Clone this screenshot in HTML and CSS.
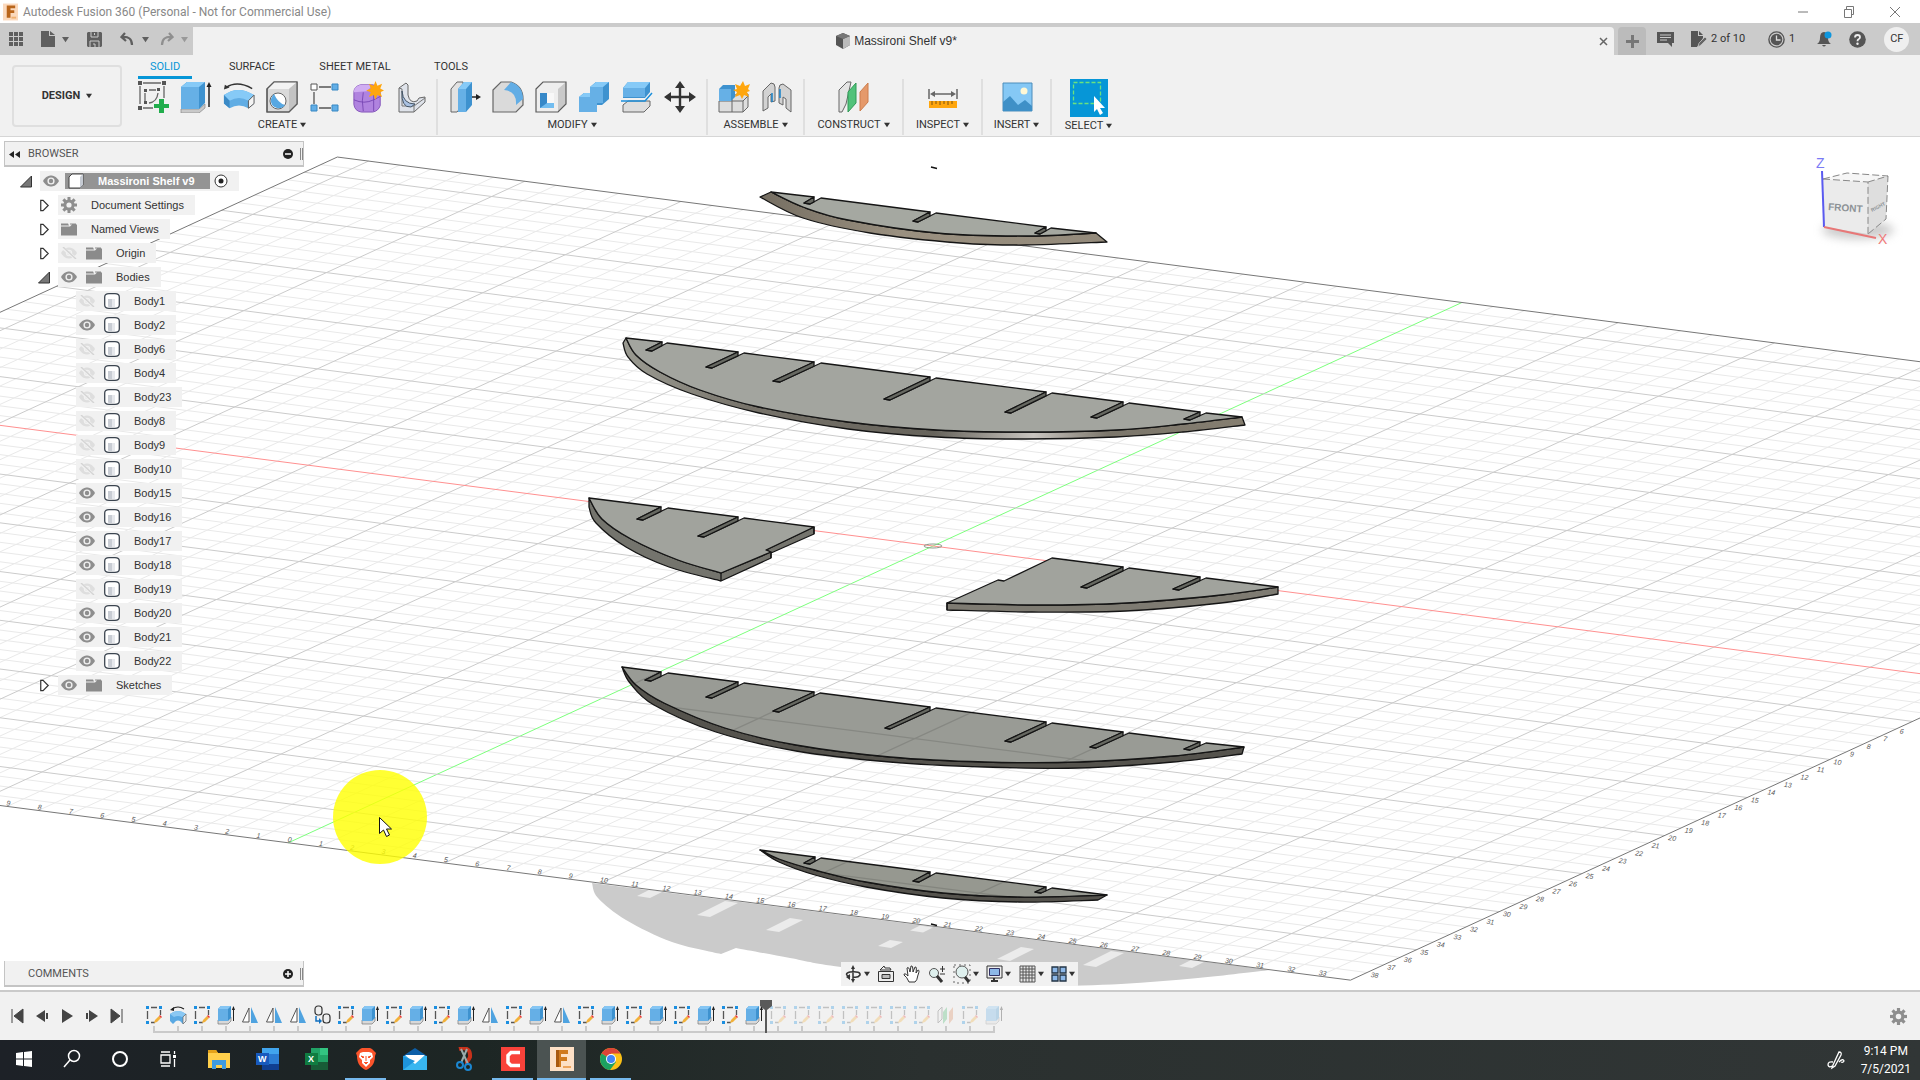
FILE: index.html
```html
<!DOCTYPE html>
<html lang="en">
<head>
<meta charset="utf-8">
<title>Autodesk Fusion 360</title>
<link rel="stylesheet" href="styles.css">
</head>
<body>
<svg class="defs" aria-hidden="true">
  <symbol id="caret" viewBox="0 0 8 8"><path d="M0 1h8L4 7z" fill="currentColor"/></symbol>
  <symbol id="eye" viewBox="0 0 16 12"><path d="M0 6C3 1 6 .5 8 .5S13 1 16 6c-3 5-6 5.500-8 5.500S3 11 0 6z" fill="#8e8e8e"/><circle cx="8" cy="6" r="3.600" fill="#f1f1f1"/><circle cx="8" cy="6" r="2.200" fill="#8e8e8e"/></symbol>
  <symbol id="eye-off" viewBox="0 0 16 12"><path d="M0 6C3 1 6 .5 8 .5S13 1 16 6c-3 5-6 5.500-8 5.500S3 11 0 6z" fill="#dedede"/><circle cx="8" cy="6" r="3.200" fill="#f1f1f1"/><circle cx="8" cy="6" r="2" fill="#dedede"/><path d="M1 0l14 12" stroke="#f1f1f1" stroke-width="3"/><path d="M2 0l13 12" stroke="#d4d4d4" stroke-width="1.400"/></symbol>
  <symbol id="folder" viewBox="0 0 16 13"><path d="M0 1h7l1 2H0zM9 1h6v1H9zM0 4h9l2-2h5v11H0z" fill="#8b8b8b"/></symbol>
  <symbol id="body" viewBox="0 0 16 16"><path d="M.7 4Q.7.7 5 .7h6q4.300 0 4.300 3.300v8q0 3.300-4.300 3.300H5Q.7 15.300.7 12z" fill="#fff" stroke="#3c4550" stroke-width="1.300"/><path d="M4 6h4v8H5q-1 0-1-1z" fill="#c9cdd4"/><path d="M8 6h3v8H8z" fill="#e6e8ec"/></symbol>
  <symbol id="gear" viewBox="0 0 16 16"><g fill="#8e8e8e"><rect x="6.500" width="3" height="16"/><rect x="6.500" width="3" height="16" transform="rotate(45 8 8)"/><rect x="6.500" width="3" height="16" transform="rotate(90 8 8)"/><rect x="6.500" width="3" height="16" transform="rotate(135 8 8)"/><circle cx="8" cy="8" r="5.600"/></g><circle cx="8" cy="8" r="2.600" fill="#f1f1f1"/></symbol>
  <symbol id="shut" viewBox="0 0 12 14"><path d="M2.500 1.500H5l5.500 5.500L5 12.500H2.500z" fill="#fff" stroke="#333" stroke-width="1.300"/></symbol>
  <symbol id="open" viewBox="0 0 12 12"><path d="M11.500.5v11H.5z" fill="#777" stroke="#333"/></symbol>
  <symbol id="f-sketch" viewBox="0 0 18 20"><path d="M2.500 6v8M6 2.500h6M15.500 5v5M6 17.500h4" stroke="#555" stroke-width="1.300" fill="none"/><g fill="#1c8fe0"><path d="M1 1h3v3H1zM14 1h3v3h-3zM1 16h3v3H1z"/></g><path d="M9 18l1-3 4-4 2 2-4 4z" fill="#f2b13a"/><path d="M14 11l1-1 2 2-1 1z" fill="#e33"/></symbol>
  <symbol id="f-extrude" viewBox="0 0 18 20"><path d="M1 15h10l3-3v4l-3 3H1z" fill="#d8d8d8" stroke="#777" stroke-width=".7"/><path d="M1 4l3-3h10v12l-3 3H1z" fill="#3e92cf"/><path d="M1 4h10v12H1z" fill="#65afe6"/><path d="M1 4l3-3h10l-3 3z" fill="#85c6f4"/><path d="M16.500 2v14" stroke="#222"/><path d="M14.800 5l1.700-4 1.500 4z" fill="#222"/></symbol>
  <symbol id="f-mirror" viewBox="0 0 18 20"><path d="M8 3v14H1.500z" fill="#fff" stroke="#555"/><path d="M10 2v16h7z" fill="#4fa3e0"/></symbol>
  <symbol id="f-revolve" viewBox="0 0 18 20"><path d="M3 4q6-4 12 0" fill="none" stroke="#222" stroke-width="1.200"/><path d="M1 5l4-3v4z" fill="#222"/><path d="M1 9q8-6 16 0v7l-3 3-3-3q-2-1-4 0l-3 3-3-3z" fill="#5aa9e3"/><path d="M1 9q8-6 16 0l-4 3q-4-2-8 0z" fill="#8ac8f3"/><path d="M14 12l3-3v7l-3 3z" fill="#eee" stroke="#666" stroke-width=".7"/></symbol>
  <symbol id="f-combine" viewBox="0 0 18 20"><g fill="#eee" stroke="#333" stroke-width="1.200"><rect x="2" y="1" width="7" height="9" rx="3"/><rect x="10" y="9" width="7" height="9" rx="3"/></g><path d="M3 11v5h4" fill="none" stroke="#1270c0" stroke-width="1.500"/><path d="M6 13l3 3-3 3z" fill="#1270c0"/></symbol>
  <symbol id="f-plane" viewBox="0 0 18 20"><path d="M1 6l4-4v12l-4 4z" fill="#eee" stroke="#555"/><path d="M6 7l4-5v12l-4 5z" fill="#47b86c"/><path d="M12 7l4-5v12l-4 5z" fill="#dd8a5b"/></symbol>
</svg>

<header class="titlebar">
  <svg class="logo" viewBox="0 0 16 18"><path d="M0 0h16v18H0z" fill="#fbd9bd"/><path d="M4 2h9v3H8v2h4v3H8v5H4z" fill="#b9651b"/><path d="M9 14h5v2H9z" fill="#f0b070"/></svg>
  <h1>Autodesk Fusion 360 (Personal - Not for Commercial Use)</h1>
  <div class="winctl">
    <button aria-label="Minimize"><svg viewBox="0 0 12 12"><path d="M1 6h10" stroke="#777"/></svg></button>
    <button aria-label="Restore"><svg viewBox="0 0 12 12"><path d="M1.500 3.500h7v8h-7zM3.500 3V.5h7v8H9" fill="none" stroke="#777"/></svg></button>
    <button aria-label="Close"><svg viewBox="0 0 12 12"><path d="M1 1l10 10M11 1L1 11" stroke="#777"/></svg></button>
  </div>
</header>

<nav class="strip">
  <div class="quick">
    <button aria-label="Data panel"><svg width="14" height="14" viewBox="0 0 14 14" fill="#5f5f5f"><path d="M0 0h4v4H0zM5 0h4v4H5zM10 0h4v4h-4zM0 5h4v4H0zM5 5h4v4H5zM10 5h4v4h-4zM0 10h4v4H0zM5 10h4v4H5zM10 10h4v4h-4z"/></svg></button>
    <button aria-label="File" class="file"><svg width="14" height="16" viewBox="0 0 14 16"><path d="M0 0h8v5h6v11H0zM9 0l5 4H9z" fill="#5f5f5f"/></svg><svg class="car"><use href="#caret"/></svg></button>
    <button aria-label="Save" class="save"><svg width="15" height="15" viewBox="0 0 15 15"><path d="M0 1l1-1h13l1 1v13l-1 1H1l-1-1z" fill="#5f5f5f"/><path d="M4 0v5h7V0M3 15V9h9v6M7.500 1v2M6 12h2v3" fill="none" stroke="#cbcbcb"/></svg></button>
    <button aria-label="Undo"><svg width="15" height="14" viewBox="0 0 15 14"><path d="M5 1L1.500 5 6 9M2 5q10-1 10 8" fill="none" stroke="#5f5f5f" stroke-width="2.200"/></svg><svg class="car"><use href="#caret"/></svg></button>
    <button aria-label="Redo" class="dim"><svg width="15" height="14" viewBox="0 0 15 14"><path d="M10 1l3.500 4L9 9M13 5Q3 4 3 13" fill="none" stroke="#8f8f8f" stroke-width="2.200"/></svg><svg class="car"><use href="#caret"/></svg></button>
  </div>
  <div class="doctab">
    <span class="docname"><svg width="16" height="16" viewBox="0 0 16 16"><path d="M8 0l7 3v9l-7 4-7-4V3z" fill="#555"/><path d="M8 6l7-3v9l-7 4z" fill="#bbb"/><path d="M8 0l7 3-7 3-7-3z" fill="#777"/></svg>Massironi Shelf v9*</span>
    <button aria-label="Close tab"><svg width="9" height="9" viewBox="0 0 9 9"><path d="M1 1l7 7M8 1L1 8" stroke="#666" stroke-width="1.500"/></svg></button>
  </div>
  <button class="newtab" aria-label="New tab"><svg width="13" height="13" viewBox="0 0 13 13"><path d="M6.500 0v13M0 6.500h13" stroke="#777" stroke-width="3"/></svg></button>
  <div class="status">
    <button aria-label="Comments"><svg width="17" height="16" viewBox="0 0 17 16"><path d="M0 1h17v11h-2v4l-4-4H0z" fill="#555"/><path d="M3 4h11M3 6.500h11M3 9h7" stroke="#cbcbcb"/></svg></button>
    <button class="docs"><svg width="16" height="16" viewBox="0 0 16 16"><path d="M0 0h7v5h5v2l-6 9H0zM8 0l4 4H8z" fill="#555"/><path d="M7 16l1-4 6-6 2 2-6 6z" fill="#666" stroke="#cbcbcb" stroke-width=".7"/></svg>2 of 10</button>
    <button class="jobs"><svg width="17" height="17" viewBox="0 0 17 17"><circle cx="8.500" cy="8.500" r="7.600" fill="none" stroke="#555" stroke-width="1.400"/><circle cx="8.500" cy="8.500" r="5.800" fill="#555"/><path d="M8.500 4.500v4.500h4" fill="none" stroke="#ddd" stroke-width="1.300"/></svg>1</button>
    <button class="bell" aria-label="Notifications"><svg width="15" height="17" viewBox="0 0 15 17"><path d="M7 1q4 0 4 6 0 4 3 6H0q3-2 3-6 0-6 4-6zM5 14h4q-2 3-4 0z" fill="#555"/><circle cx="11" cy="4" r="3.500" fill="#0d96de"/></svg></button>
    <button class="help" aria-label="Help"><svg width="17" height="17" viewBox="0 0 17 17"><circle cx="8.500" cy="8.500" r="8.300" fill="#555"/><path d="M6 6.500Q6 4 8.500 4T11 6.300Q11 7.500 9.500 8.300q-1 .5-1 2" fill="none" stroke="#eee" stroke-width="1.800"/><circle cx="8.500" cy="12.800" r="1.200" fill="#eee"/></svg></button>
    <button class="avatar">CF</button>
  </div>
</nav>

<section class="ribbon">
  <button class="workspace">DESIGN <svg class="car"><use href="#caret"/></svg></button>
  <div class="tools">
    <div class="tabs">
      <button class="on">SOLID</button><button class="t2">SURFACE</button><button class="t3">SHEET METAL</button><button class="t4">TOOLS</button>
    </div>
    <div class="groups">
      <div class="group create">
        <div class="icons">
          <button aria-label="Create sketch"><svg viewBox="0 0 32 32"><path d="M6 2h18M27 5v12M3 5v18M6 27h10" fill="none" stroke="#666" stroke-width="1.300"/><path d="M8 20V12M12 9h7M21 12q-1 9-9 10" fill="none" stroke="#666" stroke-width="1.300"/><path d="M1 0h4v4H1zM25 0h4v4h-4zM1 25h4v4H1zM7 8h3v3H7zM20 7h3v3h-3zM7 20h3v3H7z" fill="#555"/><path d="M22 18h5v5h5v4h-5v5h-5v-5h-5v-4h5z" fill="#21ad4c"/></svg></button>
          <button aria-label="Extrude"><svg viewBox="0 0 32 32"><path d="M1 28h18l6-5v4l-6 5H1z" fill="#c9c9c9" stroke="#888" stroke-width=".7"/><path d="M1 6l6-5h18v21l-6 6H1z" fill="#3e92cf"/><path d="M1 6h18v22H1z" fill="#66b0e6"/><path d="M1 6l6-5h18l-6 5z" fill="#86caf7"/><path d="M29 5v21" stroke="#222" stroke-width="1.500"/><path d="M26.500 6L29 1l2.500 5z" fill="#222"/></svg></button>
          <button aria-label="Revolve"><svg viewBox="0 0 34 32"><path d="M3 6q12-8 28 1" fill="none" stroke="#333" stroke-width="1.500"/><path d="M1 8l1-5 5 3z" fill="#333"/><path d="M1 14Q16 3 33 14v9l-6 5q-10-6-20 0l-6-5z" fill="#61ade4"/><path d="M1 14Q16 3 33 14l-6 6q-10-6-20 0z" fill="#86caf7"/><path d="M27 20l6-6v9l-6 5z" fill="#f4f4f4" stroke="#555"/><path d="M1 14l6 6v8l-6-5z" fill="#3b8ac6"/></svg></button>
          <button aria-label="Hole"><svg viewBox="0 0 32 32"><path d="M1 8l7-7h23v22l-8 8H1z" fill="#dadada" stroke="#5b5b5b" stroke-width="1.200"/><path d="M1 8l7-7h23l-8 7z" fill="#f3f3f3"/><path d="M23 8l8-7v22l-8 8z" fill="#c3c3c3"/><path d="M1 8l7-7h23v22l-8 8H1z" fill="none" stroke="#5b5b5b" stroke-width="1.200"/><circle cx="12" cy="20" r="8" fill="#fff" stroke="#666"/><path d="M8 13q4 9 11 11-3 4-8 3-7-2-6-9 1-3 3-5z" fill="#58a8e2"/></svg></button>
          <button aria-label="Pattern"><svg viewBox="0 0 32 32"><path d="M10 6h12M5 11v12M10 27h12" stroke="#555" stroke-width="1.300"/><path d="M2 3h6v6H2z" fill="#fff" stroke="#555"/><g fill="#62aee6" stroke="#3787c3"><path d="M23 3h6v6h-6zM2 24h6v6H2zM23 24h6v6h-6z"/></g></svg></button>
          <button aria-label="Create form"><svg viewBox="0 0 34 34"><path d="M2 12q0-6 7-8h13q7 2 8 8v14q-2 6-8 7H10q-7-1-8-8z" fill="#b083df" stroke="#8353ba"/><path d="M2 12q0-6 7-8h13l-6 7z" fill="#d0adf2"/><path d="M12 12q-2 8 0 20M2 20q11 5 21 0t7-4M23 12v20" fill="none" stroke="#7a49b5"/><path d="M25 0l2 5 5-2-2 5 4 2-4 2 2 5-5-2-2 5-2-5-5 2 2-5-5-2 5-2-2-5 5 2z" fill="#ffa60d"/></svg></button>
          <button aria-label="Create flange"><svg viewBox="0 0 32 32"><path d="M4 7l7-5 2 2v10q2 9 9 6l2-3 6-1v5L19 31H4z" fill="#dfe3ea" stroke="#666"/><path d="M4 7l3 1v17h12l11-8M19 25v6" fill="none" stroke="#777"/><path d="M7 10q1 13 13 13l-4 3Q6 27 7 10z" fill="#a9c1e2" stroke="#456"/></svg></button>
        </div>
        <button class="lab">CREATE <svg class="car"><use href="#caret"/></svg></button>
      </div>
      <div class="group modify">
        <div class="icons">
          <button aria-label="Press pull"><svg viewBox="0 0 32 32"><path d="M2 8l6-7h6v23l-6 7H2z" fill="#e2e2e2" stroke="#666"/><path d="M9 8l6-7h8v23l-6 7H9z" fill="#3e92cf"/><path d="M9 8h8v23H9z" fill="#66b0e6"/><path d="M9 8l6-7h8l-6 7z" fill="#86caf7"/><path d="M23 16h6" stroke="#222" stroke-width="1.500"/><path d="M27 13l5 3-5 3z" fill="#222"/></svg></button>
          <button aria-label="Fillet"><svg viewBox="0 0 32 32"><path d="M1 9l8-8h10q12 4 12 17v6l-7 7H1z" fill="#dadada" stroke="#666" stroke-width="1.200"/><path d="M12 9l7-8q12 4 12 17l-7 6Q25 10 12 9z" fill="#62ade5"/></svg></button>
          <button aria-label="Shell"><svg viewBox="0 0 32 32"><path d="M1 8l7-7h23v22l-8 8H1z" fill="#eee"/><path d="M23 8l8-7v22l-8 8z" fill="#c9c9c9"/><path d="M1 8l7-7h23v22l-8 8H1z" fill="none" stroke="#5b5b5b" stroke-width="1.200"/><path d="M5 12h14v15H5z" fill="#72bdf0"/><path d="M5 12h7v10l-7 5z" fill="#3688c8"/><path d="M12 12h7v10h-7z" fill="#f8f8f8"/></svg></button>
          <button aria-label="Combine"><svg viewBox="0 0 32 32"><path d="M1 16l5-4h6V6l6-5h13v17l-7 6h-5v2l-5 5H1z" fill="#3e92cf"/><path d="M12 6h13v16h-6v9H1V16h11z" fill="#66b0e6"/><path d="M12 6l6-5h13l-6 5zM1 16l5-4h6v4z" fill="#86caf7"/></svg></button>
          <button aria-label="Split body"><svg viewBox="0 0 32 32"><path d="M2 24l5-4h22v5l-6 6H2z" fill="#dedede" stroke="#666"/><path d="M2 7l5-6h22v10l-5 6H2z" fill="#3e92cf"/><path d="M2 7h22v9H2z" fill="#66b0e6"/><path d="M2 7l5-6h22l-5 6z" fill="#86caf7"/><path d="M0 20h24l7-8" fill="none" stroke="#1b8fdb" stroke-width="1.500"/></svg></button>
          <button aria-label="Move"><svg viewBox="0 0 32 32"><path d="M16 3v26M3 16h26" stroke="#333" stroke-width="2.400"/><path d="M11 7l5-7 5 7zM11 25l5 7 5-7zM7 11l-7 5 7 5zM25 11l7 5-7 5z" fill="#333"/></svg></button>
        </div>
        <button class="lab">MODIFY <svg class="car"><use href="#caret"/></svg></button>
      </div>
      <div class="group assemble">
        <div class="icons">
          <button aria-label="New component"><svg viewBox="0 0 32 32"><path d="M1 20h13v-4l5-3h11v13l-5 5H1z" fill="#dedede" stroke="#666"/><path d="M14 20v11M14 20h11l5-5M25 20v11" fill="none" stroke="#666"/><path d="M1 8l4-4h12v12l-4 4H1z" fill="#3e92cf"/><path d="M1 8h12v12H1z" fill="#66b0e6"/><path d="M25 0l2 5 5-2-2 5 2 2-3 1 2 5-5-2-2 4-2-4-5 2 2-5-4-2 4-1-2-5 5 2z" fill="#ffa60d"/></svg></button>
          <button aria-label="Joint"><svg viewBox="0 0 32 32"><path d="M2 10l8-8q4 0 4 4v14l-4 1v-8l-3 3v11l-5 3zM30 9l-8-6q-4 0-4 4v15l4 2v-8l3 2v9l5 4z" fill="#d2d2d2" stroke="#666"/><path d="M11 12v9M19 8v9" stroke="#1681c9" stroke-width="1.500"/></svg></button>
        </div>
        <button class="lab">ASSEMBLE <svg class="car"><use href="#caret"/></svg></button>
      </div>
      <div class="group construct">
        <div class="icons"><button aria-label="Offset plane"><svg viewBox="0 0 32 32"><path d="M1 9l8-8h4l-5 22-4 8H1z" fill="#e4e4e4" stroke="#666"/><path d="M10 11l8-9v20l-8 9z" fill="#51c27a" stroke="#2f9a56"/><path d="M22 11l8-9v19l-8 9z" fill="#e5996a" stroke="#cc7d4c"/></svg></button></div>
        <button class="lab">CONSTRUCT <svg class="car"><use href="#caret"/></svg></button>
      </div>
      <div class="group inspect">
        <div class="icons"><button aria-label="Measure"><svg viewBox="0 0 32 32"><path d="M2 8v10M30 8v10M5 13h22" stroke="#666" stroke-width="1.500"/><path d="M3 13l5-3v6zM29 13l-5-3v6z" fill="#666"/><path d="M2 20h28v7H2z" fill="#ffa60d"/><path d="M5 20v4M9 20v3M13 20v4M17 20v3M21 20v4M25 20v3" stroke="#7a5310"/></svg></button></div>
        <button class="lab">INSPECT <svg class="car"><use href="#caret"/></svg></button>
      </div>
      <div class="group insert">
        <div class="icons"><button aria-label="Decal"><svg viewBox="0 0 32 32"><path d="M2 2h29v28H2z" fill="#85c8f5" stroke="#4d8dbb"/><path d="M2 30V21l7-6 8 9 7-5 7 6v5z" fill="#3f90c7"/><circle cx="23" cy="10" r="3.500" fill="#fff8d5"/></svg></button></div>
        <button class="lab">INSERT <svg class="car"><use href="#caret"/></svg></button>
      </div>
      <div class="group select">
        <div class="icons"><button class="active" aria-label="Select"><svg viewBox="0 0 38 38"><path d="M3.500 3.500h27v21h-27z" fill="none" stroke="#6be27e" stroke-width="1.300" stroke-dasharray="4 2"/><path d="M24 17v16l3-3 3 6 3-2-3-5h5z" fill="#fff"/></svg></button></div>
        <button class="lab">SELECT <svg class="car"><use href="#caret"/></svg></button>
      </div>
    </div>
  </div>
</section>

<main class="viewport">
  <svg class="scene" viewBox="0 137 1920 853" preserveAspectRatio="xMidYMid slice">
    <defs>
      <linearGradient id="rim" x1="0" x2="1"><stop offset="0" stop-color="#9b9b92"/><stop offset=".2" stop-color="#77736a"/><stop offset=".5" stop-color="#66635b"/><stop offset=".66" stop-color="#c9c5c0"/><stop offset=".78" stop-color="#7b766b"/><stop offset="1" stop-color="#857e70"/></linearGradient>
      <linearGradient id="rimTop" x1="0" x2="1"><stop offset="0" stop-color="#756e62"/><stop offset=".4" stop-color="#9a9080"/><stop offset="1" stop-color="#938a7b"/></linearGradient>
      <filter id="soft" x="-50%" y="-50%" width="200%" height="200%"><feGaussianBlur stdDeviation="5"/></filter>
    </defs>
    <g id="shadow"></g>
    <g id="grid" fill="none"></g>
    <g id="labels"></g>
    <g id="shelves" stroke="#151515" stroke-width="1.300" stroke-linejoin="round"></g>
    <path d="M931 167l6 1.500M931 924l6 1.500" stroke="#111" stroke-width="1.500"/>
    <ellipse cx="933" cy="546" rx="9" ry="2" fill="none" stroke="#8a9a8a"/>
    <g>
      <ellipse cx="1858" cy="230" rx="36" ry="9" fill="#999" opacity=".5" filter="url(#soft)"/>
      <path d="M1823 179l45 3v52l-44-7z" fill="#ebebeb"/><path d="M1868 182l20-6-2 43-18 15z" fill="#dedede"/><path d="M1823 179l24-6 41 3-20 6z" fill="#f6f6f6"/>
      <path d="M1823 179l45 3v52M1868 182l20-6-2 43-18 15M1823 179l24-6 41 3" fill="none" stroke="#888" stroke-dasharray="7 3"/>
      <path d="M1822 171l2 56" stroke="#5a5af0" stroke-width="2"/><path d="M1824 227l52 11" stroke="#e87777" stroke-width="2"/>
      <text x="1816" y="168" class="ax-z">Z</text><text x="1878" y="244" class="ax-x">X</text>
      <text x="1828" y="210" class="face" transform="rotate(4 1828 210)">FRONT</text>
      <text x="1872" y="212" class="side" transform="rotate(-28 1872 212)">RIGHT</text>
    </g>
    <circle cx="380" cy="817" r="47" fill="#ffff00" opacity=".8"/>
    <path d="M379.500 817.500v16l4-3.500 3 6.500 3-1.500-3-6h5z" fill="#fff" stroke="#111"/>
  </svg>

  <aside class="left">
    <div class="panelhead">
      <svg width="11" height="7" viewBox="0 0 11 7"><path d="M5 0v7L0 3.500zM11 0v7L6 3.500z" fill="#222"/></svg>
      <h2>BROWSER</h2>
      <button aria-label="Collapse"><svg width="10" height="10" viewBox="0 0 10 10"><circle cx="5" cy="5" r="5" fill="#222"/><path d="M2 5h6" stroke="#fff" stroke-width="1.500"/></svg></button><i class="grip"></i>
    </div>
    <ul class="tree">
      <li class="l0"><svg class="tw"><use href="#open"/></svg><span class="row"><svg class="eye"><use href="#eye"/></svg><span class="chosen"><svg width="16" height="16" viewBox="0 0 16 16"><path d="M1 4l3-3h11v11l-3 3H1z" fill="#fff" stroke="#444"/><path d="M12 4l3-3v11l-3 3z" fill="#c5cad2"/></svg>Massironi Shelf v9</span><svg width="14" height="14" viewBox="0 0 14 14"><circle cx="7" cy="7" r="6" fill="#fff" stroke="#333"/><circle cx="7" cy="7" r="2.500" fill="#222"/></svg></span></li>
      <li class="l1"><svg class="tw"><use href="#shut"/></svg><span class="row"><svg class="ico"><use href="#gear"/></svg>Document Settings</span></li>
      <li class="l1"><svg class="tw"><use href="#shut"/></svg><span class="row"><svg class="ico"><use href="#folder"/></svg>Named Views</span></li>
      <li class="l1"><svg class="tw"><use href="#shut"/></svg><span class="row"><svg class="eye"><use href="#eye-off"/></svg><svg class="ico"><use href="#folder"/></svg>Origin</span></li>
      <li class="l1"><svg class="tw"><use href="#open"/></svg><span class="row"><svg class="eye"><use href="#eye"/></svg><svg class="ico"><use href="#folder"/></svg>Bodies</span></li>
      <li class="l2"><span class="row"><svg class="eye"><use href="#eye-off"/></svg><svg class="ico"><use href="#body"/></svg>Body1</span></li>
      <li class="l2"><span class="row"><svg class="eye"><use href="#eye"/></svg><svg class="ico"><use href="#body"/></svg>Body2</span></li>
      <li class="l2"><span class="row"><svg class="eye"><use href="#eye-off"/></svg><svg class="ico"><use href="#body"/></svg>Body6</span></li>
      <li class="l2"><span class="row"><svg class="eye"><use href="#eye-off"/></svg><svg class="ico"><use href="#body"/></svg>Body4</span></li>
      <li class="l2"><span class="row"><svg class="eye"><use href="#eye-off"/></svg><svg class="ico"><use href="#body"/></svg>Body23</span></li>
      <li class="l2"><span class="row"><svg class="eye"><use href="#eye-off"/></svg><svg class="ico"><use href="#body"/></svg>Body8</span></li>
      <li class="l2"><span class="row"><svg class="eye"><use href="#eye-off"/></svg><svg class="ico"><use href="#body"/></svg>Body9</span></li>
      <li class="l2"><span class="row"><svg class="eye"><use href="#eye-off"/></svg><svg class="ico"><use href="#body"/></svg>Body10</span></li>
      <li class="l2"><span class="row"><svg class="eye"><use href="#eye"/></svg><svg class="ico"><use href="#body"/></svg>Body15</span></li>
      <li class="l2"><span class="row"><svg class="eye"><use href="#eye"/></svg><svg class="ico"><use href="#body"/></svg>Body16</span></li>
      <li class="l2"><span class="row"><svg class="eye"><use href="#eye"/></svg><svg class="ico"><use href="#body"/></svg>Body17</span></li>
      <li class="l2"><span class="row"><svg class="eye"><use href="#eye"/></svg><svg class="ico"><use href="#body"/></svg>Body18</span></li>
      <li class="l2"><span class="row"><svg class="eye"><use href="#eye-off"/></svg><svg class="ico"><use href="#body"/></svg>Body19</span></li>
      <li class="l2"><span class="row"><svg class="eye"><use href="#eye"/></svg><svg class="ico"><use href="#body"/></svg>Body20</span></li>
      <li class="l2"><span class="row"><svg class="eye"><use href="#eye"/></svg><svg class="ico"><use href="#body"/></svg>Body21</span></li>
      <li class="l2"><span class="row"><svg class="eye"><use href="#eye"/></svg><svg class="ico"><use href="#body"/></svg>Body22</span></li>
      <li class="l1"><svg class="tw"><use href="#shut"/></svg><span class="row"><svg class="eye"><use href="#eye"/></svg><svg class="ico"><use href="#folder"/></svg>Sketches</span></li>
    </ul>
    <div class="panelhead comments">
      <h2>COMMENTS</h2>
      <button aria-label="Add comment"><svg width="10" height="10" viewBox="0 0 10 10"><circle cx="5" cy="5" r="5" fill="#222"/><path d="M2 5h6M5 2v6" stroke="#fff" stroke-width="1.500"/></svg></button><i class="grip"></i>
    </div>
  </aside>

  <div class="navbar">
    <button aria-label="Orbit"><svg width="18" height="18" viewBox="0 0 18 18"><path d="M9 2v14M6 12q-7-3 0-5 11-1 10 3-2 3-7 2" fill="none" stroke="#333" stroke-width="1.500"/><path d="M7 4l2-4 2 4zM7 14l2 4 2-4zM6 9v6l-4-3z" fill="#333"/></svg><svg class="car"><use href="#caret"/></svg></button>
    <button aria-label="Look at"><svg width="18" height="18" viewBox="0 0 18 18"><path d="M1.500 6.500h15v10h-15zM3 5l4-4 1 2h5l1 2z" fill="#eee" stroke="#333"/><path d="M5 9.500h8v4H5z" fill="#bbb" stroke="#333"/></svg></button>
    <button aria-label="Pan"><svg width="18" height="18" viewBox="0 0 18 18"><path d="M6 17q-2-5-5-7 0-3 4 1L4 3q2-2 3 4l1-6q2-1 2 6l2-5q2-1 1 6l2-3q2 0 0 5-1 6-3 7z" fill="#fff" stroke="#333"/></svg></button>
    <button aria-label="Zoom"><svg width="18" height="18" viewBox="0 0 18 18"><circle cx="6" cy="8" r="4.500" fill="#dff0ee" stroke="#555"/><path d="M9 11l5 6" stroke="#333" stroke-width="3"/><path d="M12 4h5M14.500 1v6M12 9h5" stroke="#333"/></svg></button>
    <button aria-label="Fit"><svg width="18" height="20" viewBox="0 0 18 20"><path d="M1 1h16v18H1z" fill="none" stroke="#666" stroke-dasharray="2 3"/><circle cx="9" cy="8" r="6" fill="#dff0ee" stroke="#555"/><path d="M12 13l4 5" stroke="#333" stroke-width="3"/></svg><svg class="car"><use href="#caret"/></svg></button>
    <button aria-label="Display"><svg width="17" height="18" viewBox="0 0 17 18"><path d="M1 1h15v12H1z" fill="#eee" stroke="#333"/><path d="M3.500 3.500h10v7h-10z" fill="#8db8e8" stroke="#336"/><path d="M5 16h7M8 13v3" stroke="#333" stroke-width="2"/></svg><svg class="car"><use href="#caret"/></svg></button>
    <button aria-label="Grid"><svg width="17" height="18" viewBox="0 0 17 18"><path d="M1 1h15v16H1zM4 1v16M7 1v16M10 1v16M13 1v16M1 4h15M1 7h15M1 10h15M1 13h15" fill="#e6e6e6" stroke="#555"/></svg><svg class="car"><use href="#caret"/></svg></button>
    <button aria-label="Viewports"><svg width="16" height="16" viewBox="0 0 16 16"><path d="M1 1h6v6H1zM9 1h6v6H9zM1 9h6v6H1zM9 9h6v6H9z" fill="#8db8e8" stroke="#234" stroke-width="1.300"/></svg><svg class="car"><use href="#caret"/></svg></button>
  </div>
</main>

<section class="timeline">
  <div class="playback">
    <button aria-label="Start"><svg viewBox="0 0 16 16"><path d="M3 1v14M14 1v14L5 8z" fill="#444" stroke="#444"/></svg></button>
    <button aria-label="Step back"><svg viewBox="0 0 16 16"><path d="M11 2v12L2 8zM12 5h2v6h-2z" fill="#444"/></svg></button>
    <button aria-label="Play"><svg viewBox="0 0 16 16"><path d="M3 1v14l11-7z" fill="#444"/></svg></button>
    <button aria-label="Step forward"><svg viewBox="0 0 16 16"><path d="M5 2v12l9-6zM2 5h2v6H2z" fill="#444"/></svg></button>
    <button aria-label="End"><svg viewBox="0 0 16 16"><path d="M13 1v14M2 1v14l9-7z" fill="#444" stroke="#444"/></svg></button>
  </div>
  <div class="track" id="track"></div>
  <button class="settings" aria-label="Settings"><svg width="17" height="17"><use href="#gear"/></svg></button>
</section>

<footer class="taskbar">
  <button aria-label="Start"><svg viewBox="0 0 24 24"><path d="M4 6l7-1v6.500H4zM12 5l8-1v7.500h-8zM4 12.500h7V19l-7-1zM12 12.500h8V20l-8-1z" fill="#fff"/></svg></button>
  <button aria-label="Search"><svg viewBox="0 0 24 24"><circle cx="14" cy="9" r="5.500" fill="none" stroke="#fff" stroke-width="1.500"/><path d="M10 13l-6 7" stroke="#fff" stroke-width="1.500"/></svg></button>
  <button aria-label="Cortana"><svg viewBox="0 0 24 24"><circle cx="12" cy="12" r="7" fill="none" stroke="#fff" stroke-width="2"/></svg></button>
  <button aria-label="Task view"><svg viewBox="0 0 24 24"><path d="M5 8h9v8H5zM5 5h9M5 19h9M18.500 4v3M18.500 12v8" fill="none" stroke="#fff" stroke-width="1.300"/><path d="M17 8h3v3h-3z" fill="#fff"/></svg></button>
  <button class="app" aria-label="Explorer"><svg viewBox="0 0 24 24"><path d="M1 3h8l2 3h12v15H1z" fill="#ffcf4b"/><path d="M1 3h8l2 3H1z" fill="#e3a21a"/><path d="M5 13h14v9h-4v-4H9v4H5z" fill="#3f9be0"/></svg></button>
  <button class="app" aria-label="Word"><svg viewBox="0 0 24 24"><path d="M6 1h17v22H6z" fill="#2b7cd3"/><path d="M6 1h17v6H6z" fill="#41a5ee"/><path d="M6 17h17v6H6z" fill="#103f91"/><path d="M0 6h13v12H0z" fill="#185abd"/><text x="2" y="15" class="mk">W</text></svg></button>
  <button class="app" aria-label="Excel"><svg viewBox="0 0 24 24"><path d="M6 1h17v22H6z" fill="#21a366"/><path d="M15 1h8v7h-8z" fill="#33c481"/><path d="M6 15h17v8H6z" fill="#185c37"/><path d="M0 6h13v12H0z" fill="#107c41"/><text x="3" y="15" class="mk">X</text></svg></button>
  <button class="app run" aria-label="Brave"><svg viewBox="0 0 24 24"><path d="M6 2l2-1h8l2 1 4 4-1 3c0 8-4 12-9 14C7 21 3 17 3 9L2 6z" fill="#fb542b"/><path d="M6 6l3-1h6l3 1 1 4-3 3v3l-4 4-4-4v-3l-3-3z" fill="#fff"/><path d="M7 9l3 1-1 1zM17 9l-3 1 1 1zM12 9v5M10 15l2 2 2-2" fill="#fb542b" stroke="#fb542b"/></svg></button>
  <button class="app" aria-label="Mail"><svg viewBox="0 0 24 24"><path d="M0 9l12-8 12 8v2H0z" fill="#0d5fa8"/><path d="M0 9h24v14H0z" fill="#38b6f0"/><path d="M2 8h20l-10 9z" fill="#fff"/><path d="M0 23l12-9L0 9z" fill="#1e94dc"/></svg></button>
  <button class="app" aria-label="Snip"><svg viewBox="0 0 24 24"><path d="M7 2q12-3 11 8-2 5-5 5" fill="none" stroke="#c8321b" stroke-width="4"/><path d="M9 2l7 15M15 2l-6 14" stroke="#9aa" stroke-width="2"/><g fill="none" stroke="#1c86d0" stroke-width="2"><circle cx="8" cy="18" r="3"/><circle cx="16" cy="20" r="3"/></g></svg></button>
  <button class="app run" aria-label="Camtasia"><svg viewBox="0 0 24 24"><path d="M0 0h24v24H0z" fill="#f9423a"/><path d="M19 5.500H10L7 8.500v7l3 3h9" fill="none" stroke="#fff" stroke-width="3.500"/></svg></button>
  <button class="app run current" aria-label="Fusion 360"><svg viewBox="0 0 24 24"><path d="M0 0h24v24H0z" fill="#fde0c6"/><path d="M6 3h12v4h-7v3h6v4h-6v6H6z" fill="#d07a1f"/><path d="M6 3h3v17H6z" fill="#a9590f"/><path d="M13 19h8v2h-8z" fill="#eda55e"/></svg></button>
  <button class="app run" aria-label="Chrome"><svg viewBox="0 0 24 24"><circle cx="12" cy="12" r="11" fill="#fbc116"/><path d="M12 12L2.500 6.500A11 11 0 0 1 21.500 6.500H12z" fill="#dc4437"/><path d="M2.500 6.500A11 11 0 0 0 11 23l6-8-5-3z" fill="#1ca261"/><circle cx="12" cy="12" r="5" fill="#fff"/><circle cx="12" cy="12" r="4" fill="#4285f4"/></svg></button>
  <div class="tray">
    <svg width="18" height="20" viewBox="0 0 18 20"><path d="M6 15L12 2q3 0 2 3L8 16l-3 2zM6 12q-5-1-5 3 1 3 4 1M12 12q4-4 5-1-1 2-3 1" fill="none" stroke="#fff" stroke-width="1.300"/></svg>
    <time>9:14 PM<br>7/5/2021</time>
  </div>
</footer>
<script src="scene.js"></script>
</body>
</html>
```
FILE: styles.css
```css
* { box-sizing: border-box; }
body {
  margin: 0;
  height: 100vh;
  display: flex;
  flex-direction: column;
  overflow: hidden;
  background: #fff;
  color: #333;
  font: 11px/16px Roboto, "Liberation Sans", sans-serif;
}
button {
  display: flex;
  align-items: center;
  justify-content: center;
  border: 0;
  padding: 0;
  background: none;
  color: inherit;
  font: inherit;
}
svg { display: block; flex: none; }
h1, h2, ul { margin: 0; padding: 0; font: inherit; }
.defs { position: absolute; width: 0; height: 0; }
.car { width: 6px; height: 6px; }

.titlebar { height: 23px; display: flex; align-items: center; padding-left: 3px; flex: none; }
.logo { width: 15px; height: 18px; }
.titlebar h1 { margin-left: 5px; font-size: 12px; color: #888; }
.winctl { margin-left: auto; display: flex; padding-right: 2px; }
.winctl button { width: 46px; }
.winctl svg { width: 12px; height: 12px; }

.strip { height: 32px; display: flex; align-items: flex-end; background: #cbcbcb; flex: none; color: #5f5f5f; }
.quick { width: 193px; height: 32px; display: flex; align-items: center; padding-left: 9px; }
.quick .car { width: 7px; height: 7px; margin-left: 7px; }
.quick .file { margin-left: 18px; }
.quick .save { margin: 0 18px; }
.quick .dim { color: #999; margin-left: 10px; }
.doctab { flex: 1; height: 28px; display: flex; align-items: center; padding-right: 6px; background: #f1f1f1; border-radius: 0 4px 0 0; color: #333; }
.docname { flex: 1; display: flex; justify-content: center; align-items: center; gap: 3px; font: 12px/16px "Liberation Sans", sans-serif; }
.newtab { width: 28px; height: 28px; margin-left: 4px; background: #bbb; border-radius: 4px 4px 0 0; }
.status { height: 32px; display: flex; align-items: center; width: 274px; padding-left: 11px; color: #333; }
.status button { gap: 4px; }
.status .docs { margin-left: 17px; }
.status .jobs { margin-left: 23px; }
.status .bell { margin-left: 22px; }
.status .help { margin-left: 17px; }
.status .avatar { width: 25px; height: 25px; margin-left: 18px; border-radius: 50%; background: #efefef; }

.ribbon { height: 82px; display: flex; flex: none; background: #f1f1f1; border-bottom: 1px solid #d6d6d6; }
.workspace { width: 110px; height: 62px; margin: 10px 6px 0 12px; gap: 6px; border: 2px solid #dfdfdf; border-radius: 4px; font-weight: 700; }
.tabs { display: flex; height: 24px; padding-left: 10px; align-items: stretch; }
.tabs button { padding-top: 2px; border-bottom: 3px solid transparent; }
.tabs .on { width: 54px; color: #0696d7; border-color: #0696d7; }
.t2 { width: 120px; }
.t3 { width: 86px; }
.t4 { width: 106px; }
.groups { display: flex; height: 56px; }
.group { display: flex; flex-direction: column; align-items: center; border-right: 2px solid #dfdfdf; }
.icons { display: flex; gap: 11px; height: 38px; align-items: center; }
.icons svg { width: 32px; height: 32px; }
.icons .active { background: #0696d7; }
.icons .active svg { width: 38px; height: 38px; }
.lab { height: 20px; gap: 3px; }
.create { width: 310px; }
.modify { width: 270px; }
.assemble { width: 97px; }
.construct { width: 99px; }
.inspect { width: 79px; }
.insert { width: 69px; }
.select { width: 73px; border: 0; }

.viewport { flex: 1; min-height: 0; display: flex; position: relative; }
.scene { position: absolute; inset: 0; width: 100%; height: 100%; }
.scene text { font-family: "Liberation Sans", sans-serif; }
.tick { font-size: 7px; font-style: italic; fill: #555; }
.ax-z { font-size: 14px; fill: #7a7af5; }
.ax-x { font-size: 14px; fill: #f07a7a; }
.face { font-size: 10px; font-weight: 700; fill: #8d9296; }
.side { font-size: 5px; font-weight: 700; fill: #8d9296; }
.left { position: relative; display: flex; flex-direction: column; width: 300px; padding: 4px 0 3px; margin-left: 4px; }
.panelhead { display: flex; align-items: center; height: 26px; padding: 1px 0 0 4px; background: #f1f1f1; border: 1px solid #c4c4c4; border-bottom-width: 2px; color: #555; }
.panelhead h2 { flex: 1; margin-left: 8px; }
.panelhead button { margin-right: 7px; }
.grip { width: 3px; height: 12px; border: solid #888; border-width: 0 1px; }
.comments { margin-top: auto; border-top: 0; }
.comments h2 { margin-left: 19px; }
.tree { list-style: none; font: 11px/20px "Liberation Sans", sans-serif; margin-top: 2px; }
.tree li { display: flex; align-items: center; height: 24px; }
.row { display: flex; align-items: center; height: 20px; padding: 0 11px 0 3px; background: #f1f1f1; }
.tw { width: 12px; height: 13px; margin-right: 8px; }
.l0 { padding-left: 16px; }
.l1 { padding-left: 34px; }
.l2 { padding-left: 72px; }
.eye { width: 16px; height: 12px; margin-right: 9px; }
.l0 .eye { margin-right: 6px; }
.ico { width: 16px; height: 16px; margin-right: 14px; }
.chosen { display: flex; align-items: center; gap: 14px; height: 16px; padding: 0 15px 0 3px; margin-right: 4px; background: #949494; color: #fff; font-weight: 700; }
.navbar { position: absolute; left: 841px; bottom: 4px; height: 24px; width: 237px; display: flex; align-items: center; justify-content: space-between; padding: 0 3px; background: #f1f1f1; }
.navbar button { gap: 2px; }

.timeline { height: 50px; display: flex; flex: none; align-items: center; padding: 0 13px 0 5px; background: #f1f1f1; border-top: 2px solid #cacaca; }
.playback { display: flex; gap: 1px; }
.playback button { width: 24px; }
.playback svg { width: 16px; height: 16px; }
.track { display: flex; margin-left: 13px; height: 34px; position: relative; }
.feat { width: 24px; height: 34px; padding-top: 6px; position: relative; align-items: flex-start; }
.feat svg { width: 18px; height: 20px; }
.feat::before { content: ""; position: absolute; left: 11px; bottom: 0; width: 2px; height: 7px; background: #cacaca; }
.feat::after { content: ""; position: absolute; left: 11px; bottom: 0; width: 24px; height: 2px; background: #cacaca; }
.feat:last-child::after { width: 2px; }
.later svg { opacity: .3; }
.marker { position: absolute; left: 618px; top: 1px; z-index: 1; }
.settings { margin-left: auto; }

.taskbar { height: 40px; display: flex; flex: none; background: linear-gradient(90deg, #1d2127, #1d2624 25%, #2a302f 48%, #313636); }
.taskbar button { width: 48px; border-bottom: 2px solid transparent; }
.taskbar svg { width: 24px; height: 24px; }
.taskbar .app { width: 49px; }
.taskbar .app:nth-child(5) { margin-left: 2px; }
.run { position: relative; }
.run::after { content: ""; position: absolute; bottom: -2px; left: 4px; right: 4px; height: 2px; background: #76b9ed; }
.taskbar .current { background: #4b5352; }
.current::after { left: 0; right: 0; }
.mk { font: 700 9px "Liberation Sans", sans-serif; fill: #fff; }
.tray { margin-left: auto; display: flex; align-items: center; gap: 16px; padding-right: 9px; color: #fff; }
.tray svg { width: 18px; height: 20px; }
.tray time { font-size: 12px; line-height: 18px; text-align: center; }
```
FILE: scene.js
```js
const $ = id => document.getElementById(id);

// Ground plane: orthographic projection of grid units to scene coordinates.
const px = (u, v) => [933 + 31.24 * u + 16.53 * v, 546 + 4.04 * u - 7.61 * v];
const U = [-36, 34], V = [-39, 32];
const seg = (a, b, color) => `<path d="M${px(...a)}L${px(...b)}" stroke="${color}"/>`;
const minor = '#e9e9e9', major = '#cbcbcb', edge = '#777';
let fine = '', bold = '';
for (let u = U[0] + 1; u < U[1]; u++) {
  if (u % 5) fine += seg([u, V[0]], [u, V[1]], minor);
  else bold += seg([u, V[0]], [u, V[1]], u ? major : '#7dff7d');
}
for (let v = V[0] + 1; v < V[1]; v++) {
  if (v % 5) fine += seg([U[0], v], [U[1], v], minor);
  else bold += seg([U[0], v], [U[1], v], v ? major : '#ff9090');
}
$('grid').innerHTML = fine + bold +
  `<path d="M${px(U[0], V[0])}L${px(U[1], V[0])}L${px(U[1], V[1])}L${px(U[0], V[1])}z" stroke="${edge}"/>`;

let marks = '';
for (let u = -9; u < U[1]; u++) {
  const [x, y] = px(u, V[0]);
  marks += `<text class="tick" x="${x - 1}" y="${y - 1}" transform="rotate(7 ${x} ${y})">${Math.abs(u)}</text>`;
}
for (let v = V[0] + 1; v < -5; v++) {
  const [x, y] = px(U[1], v);
  if (x < 1905) marks += `<text class="tick" x="${x + 4}" y="${y + 4}" transform="rotate(7 ${x} ${y})">${-v}</text>`;
}
$('labels').innerHTML = marks;

// Catmull-Rom curve through the given points, as cubic segments.
function curve(p) {
  let d = '';
  for (let i = 0; i < p.length - 1; i++) {
    const a = p[i - 1] || p[i], b = p[i], c = p[i + 1], e = p[i + 2] || c;
    d += `C${b[0] + (c[0] - a[0]) / 6} ${b[1] + (c[1] - a[1]) / 6} ${c[0] - (e[0] - b[0]) / 6} ${c[1] - (e[1] - b[1]) / 6} ${c[0]} ${c[1]}`;
  }
  return d;
}

// slots: [edge left, floor left, floor right, edge right]
const shelves = [
  { top: '#a5a8a1', side: 'url(#rimTop)', start: [771, 192], end: [1096, 233],
    slots: [[[814, 197], [804, 203], [810, 204], [821, 198]], [[930, 212], [913, 221], [918, 222], [936, 213]], [[1046, 227], [1035, 233], [1040, 234], [1051, 228]]],
    front: [[1096, 233], [1026, 236], [937, 233], [848, 220], [803, 207], [771, 192]],
    base: [[760, 197], [803, 218], [870, 233], [960, 243], [1026, 245], [1107, 242]] },
  { top: '#a3a59f', side: 'url(#rim)', start: [626, 338], end: [1242, 417],
    slots: [[[662, 342], [646, 350], [652, 351], [667, 343]], [[738, 352], [706, 367], [712, 368], [744, 353]], [[814, 362], [773, 381], [780, 382], [821, 363]], [[930, 377], [884, 399], [890, 400], [936, 378]], [[1046, 392], [1005, 412], [1011, 413], [1052, 393]], [[1123, 402], [1091, 417], [1097, 418], [1129, 403]], [[1200, 412], [1184, 419], [1190, 420], [1206, 413]]],
    front: [[1242, 417], [1183, 424], [1116, 430], [1026, 432], [937, 430], [848, 422], [759, 407], [700, 390], [660, 372], [636, 355], [626, 338]],
    base: [[623, 343], [628, 357], [647, 374], [692, 394], [759, 413], [848, 429], [937, 437], [1026, 439], [1116, 437], [1183, 432], [1245, 425]] },
  { top: '#a1a39d', side: '#74746d', start: [589, 498], end: [814, 527],
    slots: [[[661, 507], [637, 519], [643, 520], [668, 508]], [[738, 517], [698, 536], [704, 537], [744, 518]]],
    cut: [[766, 550], [771, 552], [721, 573]],
    front: [[721, 573], [678, 560], [631, 539], [602, 519], [589, 498]],
    base: [[589, 507], [596, 523], [626, 547], [669, 567], [721, 581]],
    tail: [[771, 558], [771, 553], [814, 534]], creases: 'M721 573v8M771 552v6M814 527v7' },
  { top: '#a1a39d', side: '#7e7b72', start: [1052, 558], end: [1278, 587],
    slots: [[[1123, 567], [1081, 587], [1087, 588], [1129, 568]], [[1200, 577], [1173, 589], [1179, 590], [1206, 578]]],
    front: [[1278, 587], [1221, 595], [1126, 603], [1037, 605], [947, 603]], back: [[998, 580], [1004, 581]],
    base: [[947, 610], [1032, 612], [1126, 611], [1221, 603], [1278, 594]], baseFrom: [947, 603], creases: 'M947 603v7' },
  { top: '#999b95', side: '#55534d', start: [622, 667], end: [1244, 747], lines: true,
    slots: [[[661, 672], [645, 680], [651, 681], [668, 673]], [[738, 682], [706, 697], [712, 698], [744, 683]], [[814, 692], [773, 711], [779, 712], [820, 693]], [[930, 707], [885, 728], [890, 729], [936, 708]], [[1046, 722], [1005, 741], [1011, 742], [1052, 723]], [[1123, 732], [1090, 747], [1096, 748], [1129, 733]], [[1200, 742], [1184, 749], [1190, 750], [1206, 743]]],
    front: [[1244, 747], [1173, 756], [1079, 762], [985, 762], [890, 757], [796, 745], [725, 728], [664, 703], [636, 685], [622, 667]],
    base: [[622, 667], [630, 683], [654, 705], [716, 732], [796, 751], [890, 762], [985, 767], [1079, 768], [1173, 762], [1242, 754]] },
  { top: '#969890', side: '#55534d', start: [760, 850], end: [1107, 895], lines: true,
    slots: [[[815, 857], [804, 863], [810, 864], [821, 858]], [[930, 872], [913, 881], [919, 882], [936, 873]], [[1046, 887], [1035, 892], [1041, 893], [1052, 888]]],
    front: [[1107, 895], [1019, 897], [943, 893], [866, 882], [815, 870], [779, 859], [760, 850]],
    base: [[760, 850], [779, 862], [815, 875], [866, 887], [943, 898], [1019, 902], [1098, 900]] }
];

$('shelves').innerHTML = shelves.map((s, i) => {
  const top = `M${s.start}` + s.slots.map(q => q.map(p => `L${p}`).join('')).join('') + `L${s.end}` +
    (s.cut || []).map(p => `L${p}`).join('') + curve(s.front) + (s.back || []).map(p => `L${p}`).join('') + 'z';
  const rim = `M${s.baseFrom || s.start}L${s.base[0]}` + curve(s.base) + (s.tail || []).map(p => `L${p}`).join('') +
    `L${s.end}` + (s.cut || []).map(p => `L${p}`).join('') + curve(s.front) + 'z';
  const walls = s.slots.map(([a, b, c, d]) => {
    const y = d[1] + (c[1] - d[1]) * (d[0] - a[0]) / (d[0] - c[0]);
    return `<path d="M${a}L${b}L${c}L${a[0]} ${y}z" fill="#666861"/>`;
  }).join('');
  const under = s.lines ? `<clipPath id="c${i}"><path d="${top}"/></clipPath><g clip-path="url(#c${i})" opacity=".12">${
    bold.replace(/stroke="#[0-9a-f]+"/g, 'stroke="#000"')}</g>` : '';
  return `<path d="${rim}" fill="${s.side}"/><path d="${top}" fill="${s.top}"/>${under}${walls}` +
    (s.creases ? `<path d="${s.creases}"/>` : '');
}).join('');

// Cast shadow, seen below the front edge of the ground plane.
const shadowLeft = [[592, 883], [598, 898], [626, 920], [672, 942], [721, 954]];
const shadowRight = [[736, 948], [790, 958], [841, 967], [978, 983], [1040, 986], [1121, 984], [1198, 978], [1270, 970]];
// [x, y, reach] of each gap of light
const gaps = [[650, 893, 6], [718, 908, 14], [785, 924, 12], [891, 943, 6], [922, 928, 5], [1016, 953, 12], [1104, 958, 14], [1192, 963, 6]];
$('shadow').innerHTML = `<path d="M592 883${curve(shadowLeft)}L736 948${curve(shadowRight)}z" fill="#cbcbcb"/>` +
  gaps.map(([x, y, r]) => `<path d="M${x - r - 7} ${y + r / 2}l13 2l${r * 2} ${-r}l-13-2z" fill="#ebebeb"/>`).join('');

// Feature history; the ones after the marker are rolled back.
const kinds = { s: 'sketch', e: 'extrude', m: 'mirror', r: 'revolve', c: 'combine', p: 'plane' };
const history = [...'srsemmmcsesesemsemseseseses'.slice(0, 26), ...'ssssssspse'];
const done = 26;
$('track').innerHTML = '<svg class="marker" width="12" height="33" viewBox="0 0 12 33"><path d="M0 0h12v6L7 10v23H5V10L0 6z" fill="#5a5a5a"/></svg>' +
  history.map((k, i) =>
    `<button class="feat${i < done ? '' : ' later'}" aria-label="${kinds[k]}"><svg><use href="#f-${kinds[k]}"/></svg></button>`).join('');
```
